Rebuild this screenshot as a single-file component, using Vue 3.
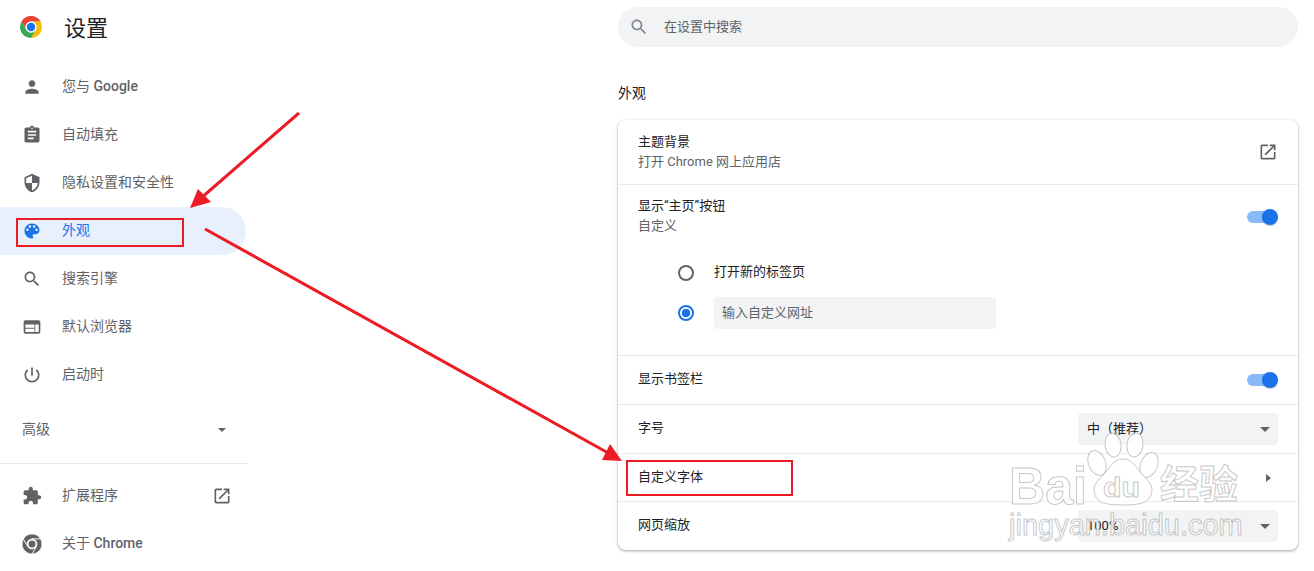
<script setup>
const icons = {
  person: 'M12 12c2.21 0 4-1.79 4-4s-1.79-4-4-4-4 1.79-4 4 1.79 4 4 4zm0 2c-2.67 0-8 1.34-8 4v2h16v-2c0-2.66-5.33-4-8-4z',
  assignment: 'M19 3h-4.18C14.4 1.84 13.3 1 12 1c-1.3 0-2.4.84-2.82 2H5c-1.1 0-2 .9-2 2v14c0 1.1.9 2 2 2h14c1.1 0 2-.9 2-2V5c0-1.1-.9-2-2-2zm-7 0c.55 0 1 .45 1 1s-.45 1-1 1-1-.45-1-1 .45-1 1-1zm2 14H7v-2h7v2zm3-4H7v-2h10v2zm0-4H7V7h10v2z',
  security: 'M12 1L3 5v6c0 5.55 3.84 10.74 9 12 5.16-1.26 9-6.45 9-12V5l-9-4zm0 10.99h7c-.53 4.12-3.28 7.79-7 8.94V12H5V6.3l7-3.11v8.8z',
  palette: 'M12 3c-4.97 0-9 4.03-9 9s4.03 9 9 9c.83 0 1.5-.67 1.5-1.5 0-.39-.15-.74-.39-1.01-.23-.26-.38-.61-.38-.99 0-.83.67-1.5 1.5-1.5H16c2.76 0 5-2.24 5-5 0-4.42-4.03-8-9-8zm-5.5 9c-.83 0-1.5-.67-1.5-1.5S5.67 9 6.5 9 8 9.67 8 10.5 7.33 12 6.5 12zm3-4C8.67 8 8 7.33 8 6.5S8.67 5 9.5 5s1.5.67 1.5 1.5S10.33 8 9.5 8zm5 0c-.83 0-1.5-.67-1.5-1.5S13.67 5 14.5 5s1.5.67 1.5 1.5S15.33 8 14.5 8zm3 4c-.83 0-1.5-.67-1.5-1.5S16.67 9 17.5 9s1.5.67 1.5 1.5-.67 1.5-1.5 1.5z',
  search: 'M15.5 14h-.79l-.28-.27C15.41 12.59 16 11.11 16 9.5 16 5.91 13.09 3 9.5 3S3 5.91 3 9.5 5.91 16 9.5 16c1.61 0 3.09-.59 4.23-1.57l.27.28v.79l5 4.99L20.49 19l-4.99-5zm-6 0C7.01 14 5 11.99 5 9.5S7.01 5 9.5 5 14 7.01 14 9.5 11.99 14 9.5 14z',
  web: 'M20 4H4c-1.1 0-1.99.9-1.99 2L2 18c0 1.1.9 2 2 2h16c1.1 0 2-.9 2-2V6c0-1.1-.9-2-2-2zm-5 14H4v-4h11v4zm0-5H4V9h11v4zm5 5h-4V9h4v9z',
  power: 'M13 3h-2v10h2V3zm4.83 2.17l-1.42 1.42C17.99 7.86 19 9.81 19 12c0 3.87-3.13 7-7 7s-7-3.13-7-7c0-2.19 1.01-4.14 2.58-5.42L6.17 5.17C4.23 6.82 3 9.26 3 12c0 4.97 4.03 9 9 9s9-4.03 9-9c0-2.74-1.23-5.18-3.17-6.83z',
  extension: 'M20.5 11H19V7c0-1.1-.9-2-2-2h-4V3.5C13 2.12 11.88 1 10.5 1S8 2.12 8 3.5V5H4c-1.1 0-1.99.9-1.99 2v3.8H3.5c1.49 0 2.7 1.21 2.7 2.7s-1.21 2.7-2.7 2.7H2V20c0 1.1.9 2 2 2h3.8v-1.5c0-1.49 1.21-2.7 2.7-2.7 1.49 0 2.7 1.21 2.7 2.7V22H17c1.1 0 2-.9 2-2v-4h1.5c1.38 0 2.5-1.12 2.5-2.5S21.88 11 20.5 11z',
}
const openIcon = 'M19 19H5V5h7V3H5c-1.11 0-2 .9-2 2v14c0 1.1.89 2 2 2h14c1.1 0 2-.9 2-2v-7h-2v7zM14 3v2h3.59l-9.83 9.83 1.41 1.41L19 6.41V10h2V3h-7z'

const chromeRed = 'M12 0A12 12 0 0 1 22.39 6H12A6 6 0 0 0 6.8 15L1.61 6A12 12 0 0 1 12 0Z'
const chromeYellow = 'M22.39 6A12 12 0 0 1 12 24L17.2 15A6 6 0 0 0 12 6Z'
const chromeGreen = 'M1.61 6A12 12 0 0 0 12 24L17.2 15A6 6 0 0 1 6.8 15Z'

const navItems = [
  { label: '您与 ', latin: 'Google', icon: 'person' },
  { label: '自动填充', icon: 'assignment' },
  { label: '隐私设置和安全性', icon: 'security' },
  { label: '外观', icon: 'palette', active: true },
  { label: '搜索引擎', icon: 'search' },
  { label: '默认浏览器', icon: 'web' },
  { label: '启动时', icon: 'power' },
]
</script>

<template>
  <div class="page">
    <aside class="sidebar">
      <header class="brand">
        <svg class="logo" viewBox="0 0 24 24">
          <path :d="chromeRed" fill="#ea4335" />
          <path :d="chromeYellow" fill="#fbbc04" />
          <path :d="chromeGreen" fill="#34a853" />
          <circle cx="12" cy="12" r="6" fill="#fff" />
          <circle cx="12" cy="12" r="4.6" fill="#1a73e8" />
        </svg>
        <h1 class="brand-title">设置</h1>
      </header>

      <nav>
        <div v-for="item in navItems" :key="item.label" class="nav-item" :class="{ active: item.active }">
          <svg class="icon" viewBox="0 0 24 24"><path :d="icons[item.icon]" /></svg>
          <span class="nav-label">{{ item.label }}<b v-if="item.latin">{{ item.latin }}</b></span>
        </div>
      </nav>

      <div class="advanced">
        <span class="nav-label">高级</span>
        <span class="caret small"></span>
      </div>
      <div class="side-divider"></div>

      <div class="nav-item">
        <svg class="icon" viewBox="0 0 24 24"><path :d="icons.extension" /></svg>
        <span class="nav-label">扩展程序</span>
        <svg class="icon open-side" viewBox="0 0 24 24"><path :d="openIcon" /></svg>
      </div>
      <div class="nav-item">
        <svg class="icon" viewBox="0 0 24 24">
          <g stroke="#fff" stroke-width="0.9">
            <path :d="chromeRed" />
            <path :d="chromeYellow" />
            <path :d="chromeGreen" />
          </g>
          <circle cx="12" cy="12" r="4.2" />
        </svg>
        <span class="nav-label">关于 <b>Chrome</b></span>
      </div>
    </aside>

    <main class="main">
      <div class="search">
        <svg class="icon" viewBox="0 0 24 24"><path :d="icons.search" /></svg>
        <span class="search-text">在设置中搜索</span>
      </div>

      <h2 class="section-title">外观</h2>

      <section class="card">
        <div class="row row-theme">
          <div class="row-text">
            <div class="title">主题背景</div>
            <div class="sub">打开 Chrome 网上应用店</div>
          </div>
          <svg class="icon" viewBox="0 0 24 24"><path :d="openIcon" /></svg>
        </div>

        <div class="row-home">
          <div class="home-head">
            <div class="row-text">
              <div class="title">显示“主页”按钮</div>
              <div class="sub">自定义</div>
            </div>
            <span class="toggle"><i></i></span>
          </div>
          <div class="radio-row first">
            <span class="radio"></span>
            <span class="title">打开新的标签页</span>
          </div>
          <div class="radio-row">
            <span class="radio checked"></span>
            <div class="url-input">输入自定义网址</div>
          </div>
        </div>

        <div class="row row-48">
          <span class="title">显示书签栏</span>
          <span class="toggle"><i></i></span>
        </div>

        <div class="row row-48">
          <span class="title">字号</span>
          <div class="select"><span class="select-cn">中（推荐）</span><span class="caret"></span></div>
        </div>

        <div class="row row-47">
          <span class="title">自定义字体</span>
          <span class="caret-right"></span>
        </div>

        <div class="row row-48">
          <span class="title">网页缩放</span>
          <div class="select"><span class="select-num">100%</span><span class="caret"></span></div>
        </div>
      </section>
    </main>

    <svg class="overlay" width="1314" height="571" viewBox="0 0 1314 571">
      <!-- watermark -->
      <g class="wm">
        <ellipse cx="1113" cy="445" rx="8" ry="12" transform="rotate(-8 1113 445)" />
        <ellipse cx="1135" cy="445" rx="8" ry="12" transform="rotate(8 1135 445)" />
        <ellipse cx="1097" cy="463" rx="8.5" ry="13" transform="rotate(-22 1097 463)" />
        <ellipse cx="1149" cy="465" rx="8.5" ry="13" transform="rotate(22 1149 465)" />
        <path d="M1123 459c10 0 13 9 19 15 8 8 12 13 9 21-3 8-11 10-28 10s-25-2-28-10c-3-8 1-13 9-21 6-6 9-15 19-15z" />
        <text x="1009" y="504" class="wm-bai" textLength="78" lengthAdjust="spacingAndGlyphs">Bai</text>
        <text x="1103" y="497" class="wm-du" textLength="37" lengthAdjust="spacingAndGlyphs">du</text>
        <text x="1160" y="498" class="wm-cn">经验</text>
        <text x="1009" y="535" class="wm-url">jingyan.baidu.com</text>
      </g>
      <!-- annotations -->
      <rect x="17" y="219" width="166" height="27" class="box" />
      <rect x="627" y="461" width="165" height="34" class="box" />
      <line x1="299" y1="113" x2="200" y2="199" class="arrow-line" />
      <polygon points="190,208 198,189 211,202" class="arrow-head" />
      <line x1="205" y1="229" x2="610" y2="454" class="arrow-line" />
      <polygon points="622,461 610,444 602,460" class="arrow-head" />
    </svg>
  </div>
</template>

<style>
html, body {
  margin: 0;
  background: #fff;
}
</style>

<style scoped>
.page {
  position: relative;
  display: flex;
  width: 1314px;
  height: 571px;
  overflow: hidden;
  background: #fff;
  font-family: Roboto, "Noto Sans CJK SC", sans-serif;
  font-size: 14px;
  color: #202124;
}
.icon {
  width: 20px;
  height: 20px;
  flex-shrink: 0;
  fill: #5f6368;
}
.sidebar {
  width: 248px;
  flex-shrink: 0;
  color: #5f6368;
}
.brand {
  display: flex;
  align-items: center;
  height: 54px;
  margin-bottom: 9px;
  padding-left: 20px;
}
.logo {
  width: 22px;
  height: 22px;
}
.brand-title {
  margin: 0 0 0 22px;
  padding-bottom: 2px;
  font-size: 22px;
  font-weight: 400;
  color: #202124;
}
.nav-item {
  display: flex;
  align-items: center;
  gap: 20px;
  width: 246px;
  height: 48px;
  padding-left: 22px;
  box-sizing: border-box;
}
.nav-label {
  padding-bottom: 4px;
}
.nav-label b {
  font-weight: 500;
}
.nav-item.active {
  background: #e8f0fe;
  border-radius: 0 24px 24px 0;
  color: #1a73e8;
}
.nav-item.active .icon {
  fill: #1a73e8;
}
.open-side {
  margin-left: auto;
  margin-right: 14px;
}
.advanced {
  display: flex;
  align-items: center;
  justify-content: space-between;
  height: 48px;
  margin-top: 7px;
  padding: 0 22px;
}
.side-divider {
  height: 1px;
  margin: 9px 0 8px;
  background: #e8eaed;
}
.caret {
  width: 0;
  height: 0;
  border-left: 5px solid transparent;
  border-right: 5px solid transparent;
  border-top: 5px solid #5f6368;
}
.caret.small {
  border-left-width: 4.5px;
  border-right-width: 4.5px;
  border-top-width: 4.5px;
}
.caret-right {
  width: 0;
  height: 0;
  margin-right: 7px;
  border-top: 4.5px solid transparent;
  border-bottom: 4.5px solid transparent;
  border-left: 5px solid #5f6368;
}
.main {
  width: 680px;
  margin-left: 370px;
  padding-top: 7px;
}
.search {
  display: flex;
  align-items: center;
  gap: 15px;
  height: 40px;
  padding-left: 11px;
  border-radius: 20px;
  background: #f1f3f4;
  font-size: 13px;
  color: #5f6368;
}
.search .icon {
  fill: #80868b;
}
.search-text {
  padding-bottom: 4px;
}
.section-title {
  height: 20px;
  margin: 36px 0 17px;
  font-size: 14px;
  line-height: 20px;
  font-weight: 400;
}
.card {
  height: 430px;
  border-radius: 8px;
  background: #fff;
  box-shadow: 0 1px 2px rgba(60, 64, 67, 0.3), 0 1px 3px 1px rgba(60, 64, 67, 0.15);
}
.row {
  display: flex;
  align-items: center;
  justify-content: space-between;
  box-sizing: border-box;
  padding: 0 20px;
  border-top: 1px solid #e8eaed;
}
.row > .title,
.radio-row > .title {
  padding-bottom: 2px;
}
.row-theme {
  height: 64px;
  border-top: 0;
}
.row-48 {
  height: 49px;
}
.row-47 {
  height: 48px;
}
.row-text {
  display: flex;
  flex-direction: column;
}
.title {
  font-size: 13px;
  line-height: 20px;
  color: #202124;
}
.sub {
  font-size: 13px;
  line-height: 20px;
  color: #5f6368;
}
.row-home {
  height: 171px;
  box-sizing: border-box;
  padding: 12px 20px 0;
  border-top: 1px solid #e8eaed;
}
.home-head {
  display: flex;
  align-items: center;
  justify-content: space-between;
}
.home-head .row-text {
  margin-top: -1px;
  margin-bottom: 1px;
}
.toggle {
  position: relative;
  display: block;
  width: 28px;
  height: 12px;
  margin-right: 3px;
  border-radius: 6px;
  background: #8ab9f7;
}
.toggle i {
  position: absolute;
  top: -2px;
  right: -3px;
  width: 16px;
  height: 16px;
  border-radius: 50%;
  background: #1a73e8;
  box-shadow: 0 1px 1px rgba(0, 0, 0, 0.2);
}
.radio-row {
  display: flex;
  align-items: center;
  gap: 20px;
  height: 32px;
  margin-top: 8px;
  padding-left: 40px;
}
.radio-row.first {
  margin-top: 20px;
}
.radio {
  box-sizing: border-box;
  width: 16px;
  height: 16px;
  flex-shrink: 0;
  border: 2px solid #5f6368;
  border-radius: 50%;
}
.radio.checked {
  border-color: #1a73e8;
  background: radial-gradient(circle, #1a73e8 0, #1a73e8 4px, #fff 4.6px);
}
.url-input {
  display: flex;
  align-items: center;
  box-sizing: border-box;
  width: 282px;
  height: 32px;
  padding: 0 0 4px 8px;
  border-radius: 4px;
  background: #f1f3f4;
  font-size: 13px;
  color: #5f6368;
}
.select {
  display: flex;
  align-items: center;
  justify-content: space-between;
  box-sizing: border-box;
  width: 200px;
  height: 32px;
  padding: 0 8px;
  border-radius: 4px;
  background: #f1f3f4;
  font-size: 13px;
}
.select-cn {
  padding: 0 0 4px 1px;
}
.select-num {
  padding: 0 0 2px 1px;
}
.overlay {
  position: absolute;
  top: 0;
  left: 0;
  pointer-events: none;
}
.box {
  fill: none;
  stroke: #ed1c24;
  stroke-width: 2;
}
.arrow-line {
  stroke: #ed1c24;
  stroke-width: 3;
}
.arrow-head {
  fill: #ed1c24;
}
.wm {
  fill: rgba(255, 255, 255, 0.8);
  stroke: rgba(175, 175, 175, 0.7);
  stroke-width: 1;
}
.wm-bai {
  font-family: "Liberation Sans", sans-serif;
  font-size: 52px;
  font-weight: 700;
}
.wm-du {
  font-family: "Liberation Sans", sans-serif;
  font-size: 28px;
  font-weight: 700;
}
.wm-cn {
  font-family: "Noto Sans CJK SC", sans-serif;
  font-size: 39px;
  font-weight: 700;
}
.wm-url {
  font-family: "Liberation Sans", sans-serif;
  font-size: 29px;
}
</style>
